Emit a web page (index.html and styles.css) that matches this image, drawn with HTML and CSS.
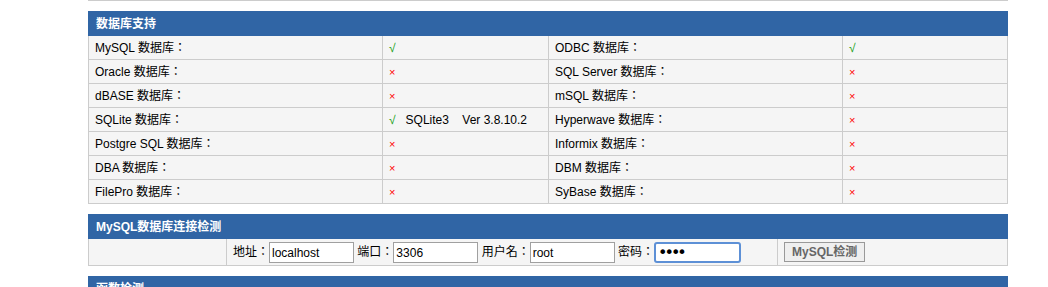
FILE: index.html
```html
<!DOCTYPE html>
<html>
<head>
<meta charset="utf-8">
<title>PHP探针</title>
<link rel="stylesheet" href="styles.css">
</head>
<body>
<div class="wrap">
  <div class="prev-end"></div>

  <table class="tbl db">
    <colgroup><col class="w-c1"><col class="w-c2"><col class="w-c3"><col class="w-c4"></colgroup>
    <tr><th colspan="4">数据库支持</th></tr>
    <tr>
      <td>MySQL 数据库：</td><td><span class="yes">√</span></td>
      <td>ODBC 数据库：</td><td><span class="yes">√</span></td>
    </tr>
    <tr>
      <td>Oracle 数据库：</td><td><span class="no">×</span></td>
      <td>SQL Server 数据库：</td><td><span class="no">×</span></td>
    </tr>
    <tr>
      <td>dBASE 数据库：</td><td><span class="no">×</span></td>
      <td>mSQL 数据库：</td><td><span class="no">×</span></td>
    </tr>
    <tr>
      <td>SQLite 数据库：</td><td><span class="yes">√</span>&nbsp;&nbsp;&nbsp;SQLite3&nbsp;&nbsp;&nbsp;&nbsp;Ver 3.8.10.2</td>
      <td>Hyperwave 数据库：</td><td><span class="no">×</span></td>
    </tr>
    <tr>
      <td>Postgre SQL 数据库：</td><td><span class="no">×</span></td>
      <td>Informix 数据库：</td><td><span class="no">×</span></td>
    </tr>
    <tr>
      <td>DBA 数据库：</td><td><span class="no">×</span></td>
      <td>DBM 数据库：</td><td><span class="no">×</span></td>
    </tr>
    <tr>
      <td>FilePro 数据库：</td><td><span class="no">×</span></td>
      <td>SyBase 数据库：</td><td><span class="no">×</span></td>
    </tr>
  </table>

  <table class="tbl conn">
    <colgroup><col class="w-k1"><col class="w-k2"><col class="w-k3"></colgroup>
    <tr><th colspan="3">MySQL数据库连接检测</th></tr>
    <tr>
      <td class="k-cell"></td>
      <td class="k-cell">地址：<input class="inp" type="text" value="localhost"> 端口：<input class="inp" type="text" value="3306"> 用户名：<input class="inp" type="text" value="root"> 密码：<input class="inp focus" type="password" value="root"></td>
      <td class="k-cell"><button class="btn" type="button">MySQL检测</button></td>
    </tr>
  </table>

  <table class="tbl fn">
    <tr><th colspan="2">函数检测</th></tr>
  </table>
</div>
</body>
</html>
```

FILE: styles.css
```css
html, body {
  margin: 0;
  padding: 0;
  background: #fff;
}

body {
  font-family: "Liberation Sans", Arial, "Noto Sans CJK JP", sans-serif;
  font-size: 12px;
  color: #000;
}

.wrap {
  width: 920px;
  margin-left: 88px;
}

.prev-end {
  height: 0;
  border-top: 1px solid #cccccc;
}

.tbl {
  width: 920px;
  border-collapse: separate;
  border-spacing: 0;
  margin-top: 10px;
  table-layout: fixed;
}

.w-c1 { width: 295px; }
.w-c2 { width: 166px; }
.w-c3 { width: 294px; }
.w-c4 { width: 165px; }
.w-k1 { width: 139px; }
.w-k2 { width: 551px; }
.w-k3 { width: 230px; }

.tbl th {
  box-sizing: border-box;
  background: #3065a5;
  color: #fff;
  font-weight: bold;
  text-align: left;
  padding: 6px 8px 4px;
  line-height: 15px;
  height: 25px;
  font-size: 12px;
}

.tbl td {
  box-sizing: border-box;
  background: #f5f5f5;
  border-right: 1px solid #cccccc;
  border-bottom: 1px solid #cccccc;
  padding: 6px 6px 4px;
  line-height: 13px;
  height: 24px;
  white-space: nowrap;
}

.tbl td:first-child {
  border-left: 1px solid #cccccc;
}

.yes { color: #129d12; line-height: 0; }
.no { color: #ff0000; font-size: 11px; line-height: 0; }

.tbl .k-cell {
  padding: 3px 6px 2px;
  height: 27px;
  line-height: 21px;
}

.inp {
  box-sizing: border-box;
  width: 85px;
  height: 21px;
  margin: 0;
  padding: 1px 2px;
  border: 1px solid #a0a0a0;
  background: #fff;
  font-family: "Liberation Sans", Arial, sans-serif;
  font-size: 12px;
  color: #000;
  vertical-align: top;
}

.inp.focus {
  width: 87px;
  border: 2px solid #5d90d6;
  border-radius: 3px;
  padding: 0 2px;
  outline: none;
  font-family: "DejaVu Sans", sans-serif;
  font-size: 16px;
  letter-spacing: -3px;
}

.btn {
  box-sizing: border-box;
  height: 20px;
  margin: 0;
  padding: 0 7px;
  border: 1px solid #999;
  background: #efefef;
  color: #666;
  font-family: "Liberation Sans", Arial, "Noto Sans CJK JP", sans-serif;
  font-size: 12px;
  font-weight: bold;
  line-height: 18px;
  vertical-align: top;
}
```
